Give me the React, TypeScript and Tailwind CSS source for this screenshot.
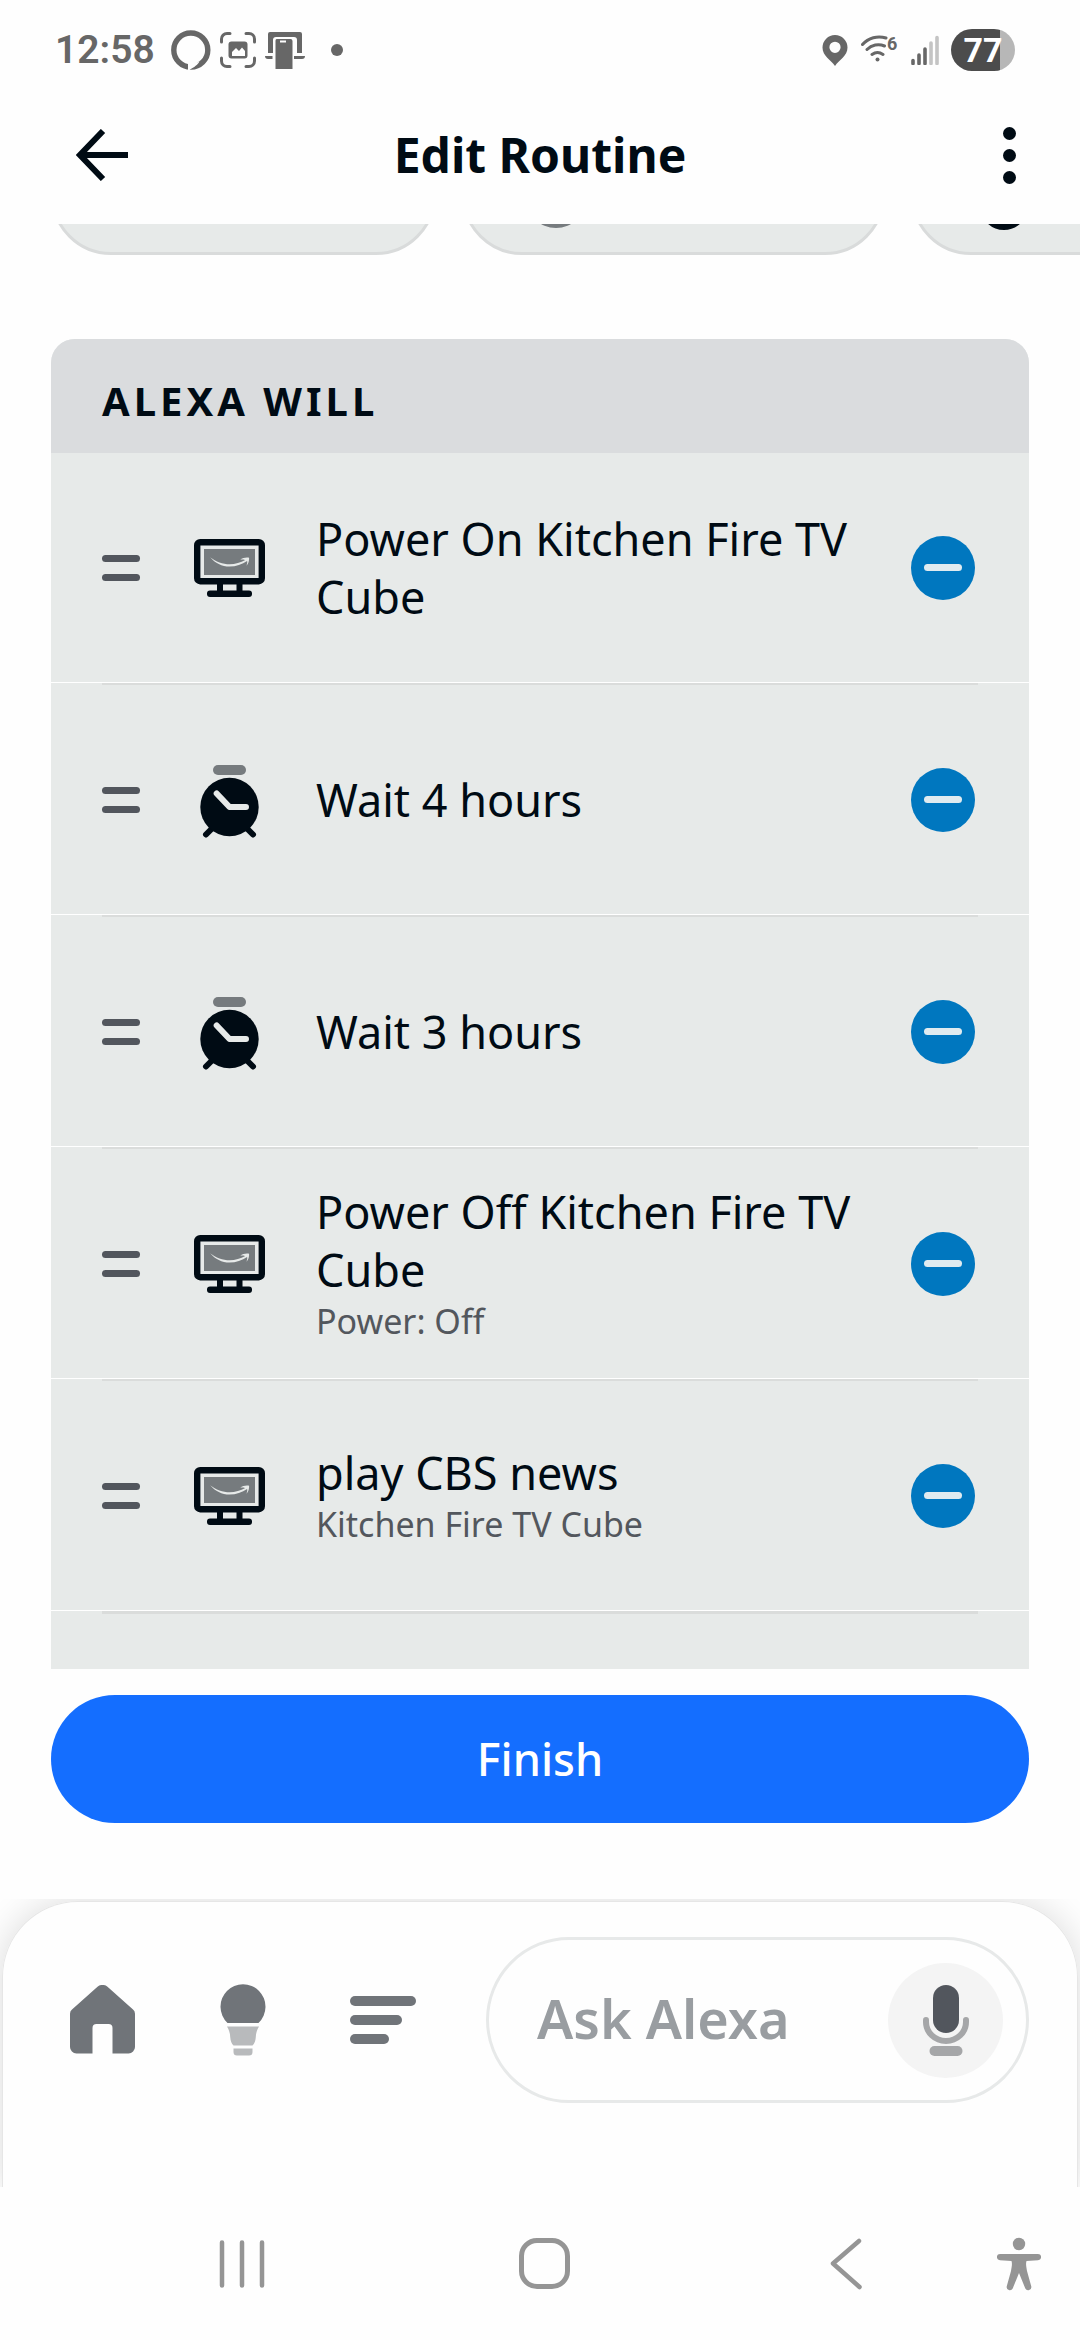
import React from 'react';

interface Action {
  id: number;
  title: string;
  subtitle?: string;
  icon: 'tv' | 'clock';
}

const actions: Action[] = [
  { id: 1, title: 'Power On Kitchen Fire TV Cube', icon: 'tv' },
  { id: 2, title: 'Wait 4 hours', icon: 'clock' },
  { id: 3, title: 'Wait 3 hours', icon: 'clock' },
  { id: 4, title: 'Power Off Kitchen Fire TV Cube', subtitle: 'Power: Off', icon: 'tv' },
  { id: 5, title: 'play CBS news', subtitle: 'Kitchen Fire TV Cube', icon: 'tv' },
];

const TvIcon = () => (
  <svg className="w-[71px] h-[58px]" viewBox="0 0 71 58" fill="none">
    <rect x="3.2" y="3.2" width="64.6" height="39" rx="3" stroke="#000b14" strokeWidth="6.4" />
    <rect x="10" y="10" width="51" height="26" fill="#767b7e" />
    <path
      d="M16.2 18.3c5.600 4.600 12.500 7 19.500 7 5.500 0 11-1.500 15.600-4.200-.8-.9-3-.8-5-.5 2-1.900 6.600-2.700 8.800-1.900.2 2.500-.6 6-2.600 8 .6-1.700 1-3.500.6-4.600-5 3.500-11 5.500-17.600 5.500-7.500 0-14.500-3.500-19.300-9.300z"
      fill="#e7eae9"
    />
    <path d="M23 44h6v8h-6zM42.500 44h6v8h-6z" fill="#000b14" />
    <rect x="13" y="51.500" width="45" height="6.500" rx="3" fill="#000b14" />
  </svg>
);

const ClockIcon = () => (
  <svg className="w-[71px] h-[76px]" viewBox="0 -3 71 76" fill="none" strokeLinecap="round" strokeLinejoin="round">
    <rect x="19" y="0" width="33" height="10" rx="5" fill="#767b7e" />
    <path d="M12 69.500l8-8M59 69.500l-8-8" stroke="#000b14" strokeWidth="6" />
    <circle cx="35.500" cy="42" r="29.200" fill="#000b14" />
    <path d="M22.700 28.500L35.500 42H52" stroke="#e7eae9" strokeWidth="6" />
  </svg>
);

const StatusBar = () => (
  <div className="flex h-[100px] items-center justify-between pl-[55px] pr-[65px] font-[Roboto,sans-serif]">
    <div className="flex items-center text-[#676767]">
      <span className="mr-[16px] text-[39px] leading-[48px] font-semibold">12:58</span>
      <svg className="mr-[9px] size-[40px]" viewBox="0 0 40 40">
        <circle cx="19.800" cy="20" r="17" fill="none" stroke="currentColor" strokeWidth="5.400" />
        <path d="M17 33.500v6.500h1.500c2.500-2 7-3.500 10-8.500l-4 1.500z" fill="#fefefe" />
      </svg>
      <svg className="mr-[9px] size-[36px]" viewBox="0 0 36 36" fill="none">
        <path
          d="M1.500 10V7a5.500 5.500 0 0 1 5.500-5.500h3M26 1.500h3A5.500 5.500 0 0 1 34.500 7v3M34.500 26v3a5.500 5.500 0 0 1-5.500 5.500h-3M10 34.500H7A5.500 5.500 0 0 1 1.500 29v-3"
          stroke="currentColor"
          strokeWidth="3"
          strokeLinecap="round"
        />
        <rect x="8.500" y="9.500" width="19" height="17" rx="3" fill="currentColor" />
        <path d="M12 24v-4l4-4 3 3 3-3.500 3 3.500v5z" fill="#fff" />
      </svg>
      <svg className="mr-[26px] h-[38px] w-[40px]" viewBox="0 0 40 38" fill="currentColor">
        <path d="M5 1h30a2 2 0 0 1 2 2v19h-5V9a3 3 0 0 0-3-3H11a3 3 0 0 0-3 3v13H3V3a2 2 0 0 1 2-2z" />
        <path d="M0 25h7.500v3H3a3 3 0 0 1-3-3zM29 25h11a3 3 0 0 1-3 3h-8z" />
        <path fillRule="evenodd" d="M11.500 8h14a2 2 0 0 1 2 2v28h-17V10a2 2 0 0 1 1-2zm3.500 1.500v2h6v-2z" />
      </svg>
      <span className="size-[12px] rounded-full bg-[#676767]" />
    </div>
    <div className="flex items-center text-[#676767]">
      <svg className="mr-[13px] h-[31px] w-[26px]" viewBox="0 0 26 31" fill="currentColor">
        <path fillRule="evenodd" d="M13 0a12.500 12.500 0 0 1 12.500 12.500C25.500 21 17 25 13 31 9 25 .5 21 .5 12.500A12.500 12.500 0 0 1 13 0zm0 6.700a5.600 5.600 0 1 0 0 11.200 5.600 5.600 0 0 0 0-11.200z" />
      </svg>
      <svg className="mr-[13px] h-[32px] w-[37px]" viewBox="0 0 37 32" fill="none">
        <path d="M1.500 10.500A22 22 0 0 1 25 4M6 15.500a16 16 0 0 1 17.500-3.500M11 20.500a9.500 9.500 0 0 1 11 0" stroke="currentColor" strokeWidth="3" strokeLinecap="round" />
        <circle cx="16.500" cy="25.500" r="2" fill="currentColor" />
        <text x="26" y="15.500" fontSize="18" fontWeight="700" fill="currentColor">6</text>
      </svg>
      <svg className="mr-[12px] h-[30px] w-[28px]" viewBox="0 0 28 30" strokeWidth="3.600" strokeLinecap="round">
        <path d="M2 25.500v3M8 20v8.500M14 14v14.500" stroke="#676767" />
        <path d="M20 8v20.500M26 2.500v26" stroke="#c4c4c4" />
      </svg>
      <span className="flex h-[42px] w-[64px] items-center justify-center rounded-full bg-linear-to-r from-[#4c4c4c] from-77% to-[#b7b7b7] to-77% text-[34px] font-bold text-white">
        77
      </span>
    </div>
  </div>
);

const Header = () => (
  <header className="mb-[14px] flex h-[110px] items-center justify-between px-[64px]">
    <button aria-label="Back" className="flex w-[64px] justify-end text-[#000b14]">
      <svg className="size-[52px]" viewBox="0 0 52 52" fill="none" stroke="currentColor" strokeWidth="6">
        <path d="M52 26H6M27 2L4 26l23 24" />
      </svg>
    </button>
    <h1 className="text-[48px] leading-[60px] font-bold">Edit Routine</h1>
    <button aria-label="More options" className="flex w-[64px] flex-col items-end gap-[9px]">
      <span className="size-[13px] rounded-full bg-[#000b14]" />
      <span className="size-[13px] rounded-full bg-[#000b14]" />
      <span className="size-[13px] rounded-full bg-[#000b14]" />
    </button>
  </header>
);

// Filter chips, scrolled most of the way under the header
const Chips = () => (
  <div className="mb-[84px] flex h-[31px] items-end gap-[26px] overflow-hidden pl-[51px]">
    <div className="h-[120px] w-[385px] shrink-0 rounded-full border-3 border-[#d9dbdb] bg-[#e7eae9]" />
    <div className="flex h-[120px] w-[423px] shrink-0 items-end rounded-full border-3 border-[#d9dbdb] bg-[#e7eae9] pb-[24px] pl-[61px]">
      <span className="size-[60px] rounded-full bg-[#767b7e]" />
    </div>
    <div className="flex h-[120px] w-[400px] shrink-0 items-end rounded-full border-3 border-[#d9dbdb] bg-[#e7eae9] pb-[22px] pl-[66px]">
      <span className="size-[48px] rounded-full border-6 border-[#000b14]" />
    </div>
  </div>
);

const ActionRow: React.FC<{ action: Action }> = ({ action }) => (
  <li className="group border-b border-white">
    <div className="mx-[51px] h-[2px] bg-[#dadcdb] group-first:hidden" />
    <div className="flex min-h-[229px] items-center pl-[51px] pr-[54px]">
      <button aria-label="Reorder" className="flex w-[38px] flex-col gap-[12px]">
        <span className="h-[7px] rounded-full bg-[#52565d]" />
        <span className="h-[7px] rounded-full bg-[#52565d]" />
      </button>
      <div className="ml-[54px] mr-[51px] flex w-[71px] shrink-0 justify-center">
        {action.icon === 'tv' ? <TvIcon /> : <ClockIcon />}
      </div>
      <div className="flex-1">
        <p className="text-[45px] leading-[58px]">{action.title}</p>
        {action.subtitle && <p className="text-[34px] leading-[45px] text-[#53575d]">{action.subtitle}</p>}
      </div>
      <button
        aria-label={`Remove ${action.title}`}
        className="ml-[36px] flex size-[64px] shrink-0 items-center justify-center rounded-full bg-[#0077bf]"
      >
        <span className="h-[7px] w-[38px] rounded-full bg-[#e0ebf0]" />
      </button>
    </div>
  </li>
);

const BottomBar = () => (
  <div className="overflow-hidden pt-[2px]">
    <div className="mx-[2px] flex items-center rounded-t-[76px] border border-b-0 border-[#e6e6e6] pt-[35px] pr-[48px] pb-[84px] pl-[67px] shadow-[0_0_36px_rgba(0,0,0,0.14)]">
      <nav className="mr-[70px] flex items-center gap-[74px] text-[#707479]">
        <button aria-label="Home">
          <svg className="h-[70px] w-[66px]" viewBox="0 0 66 70" fill="currentColor">
            <path d="M27.500 1.800a7.500 7.500 0 0 1 10 0L63 24.500a5.500 5.500 0 0 1 2 4.200V62a6.500 6.500 0 0 1-6.500 6.500H42.500V43a4 4 0 0 0-4-4h-12a4 4 0 0 0-4 4v25.500H6.500A6.500 6.500 0 0 1 0 62V28.700a5.500 5.500 0 0 1 2-4.200z" />
          </svg>
        </button>
        <button aria-label="Devices">
          <svg className="h-[72px] w-[66px]" viewBox="0 0 66 72">
            <path d="M17.500 39a22.500 22.500 0 1 1 31 0z" fill="currentColor" />
            <path d="M17 42.500h32c-1.800 3-3 6-3.200 10.500-.3 4-1.300 6.500-3.300 8.500h-19c-2-2-3-4.500-3.300-8.500-.2-4.500-1.400-7.500-3.200-10.500zM23.500 64.500h19v3.500a3.500 3.500 0 0 1-3.500 3.500H27a3.500 3.500 0 0 1-3.500-3.500z" fill="#b8babc" />
          </svg>
        </button>
        <button aria-label="More" className="flex w-[66px] flex-col gap-[9px]">
          <span className="h-[10px] w-full rounded-full bg-[#707479]" />
          <span className="h-[10px] w-[52px] rounded-full bg-[#707479]" />
          <span className="h-[10px] w-[39px] rounded-full bg-[#707479]" />
        </button>
      </nav>
      <div className="flex h-[166px] min-w-0 flex-1 items-center rounded-full border-3 border-[#e7e9e9] pr-[23px] pl-[48px]">
        <input
          type="text"
          aria-label="Ask Alexa"
          placeholder="Ask Alexa"
          className="min-w-0 flex-1 pb-1 text-[54px] leading-[70px] font-semibold outline-none placeholder:text-[#999da1]"
        />
        <button aria-label="Speak" className="flex size-[115px] shrink-0 items-center justify-center rounded-full bg-[#f4f4f4]">
          <svg className="h-[71px] w-[46px]" viewBox="0 0 46 71" fill="none">
            <path d="M3 35v2a20 19 0 0 0 40 0v-2" stroke="#a5a6a8" strokeWidth="6" strokeLinecap="round" />
            <rect x="10" y="0" width="26" height="48" rx="13" fill="#52565d" />
            <rect x="6.500" y="61" width="33" height="10" rx="5" fill="#a5a6a8" />
          </svg>
        </button>
      </div>
    </div>
  </div>
);

const SystemNav = () => (
  <nav className="flex h-[153px] items-center pr-[39px] pl-[91px] text-[#959595]">
    <button aria-label="Recents" className="flex flex-1 justify-center">
      <svg className="h-[52px] w-[46px]" viewBox="0 0 46 52" fill="none" stroke="currentColor" strokeWidth="4.500" strokeLinecap="round">
        <path d="M3 4.500v43M23 4.500v43M43 4.500v43" />
      </svg>
    </button>
    <button aria-label="Home screen" className="flex flex-1 justify-center">
      <span className="size-[51px] rounded-[18px] border-5 border-[#959595]" />
    </button>
    <button aria-label="Back" className="flex flex-1 justify-center">
      <svg className="h-[52px] w-[32px]" viewBox="0 0 32 52" fill="none" stroke="currentColor" strokeWidth="4.500" strokeLinecap="round" strokeLinejoin="round">
        <path d="M29 3L3 25.500 29.500 49" />
      </svg>
    </button>
    <button aria-label="Accessibility">
      <svg className="h-[54px] w-[44px]" viewBox="0 0 44 54" fill="currentColor">
        <circle cx="22" cy="7" r="6.200" />
        <path d="M3 17h38a3 3 0 0 1 0 6.200L29.500 24c-1 3 0 7 .5 10l4.300 15.500a3.200 3.200 0 0 1-6 2L22 36l-6.300 15.500a3.200 3.200 0 0 1-6-2L14 34c.5-3 1.500-7 .5-10L3 23.200A3 3 0 0 1 3 17z" />
      </svg>
    </button>
  </nav>
);

const App: React.FC = () => {
  return (
    <div className="flex min-h-screen flex-col bg-[#fefefe] font-['Noto_Sans',sans-serif] text-[#000b14]">
      <StatusBar />
      <Header />
      <main className="flex-1">
        <Chips />
        <section className="mx-[51px] overflow-hidden rounded-t-[24px] bg-[#e7eae9]">
          <div className="flex h-[114px] items-center bg-[#dadcde] pt-[10px] pl-[51px]">
            <h2 className="text-[40px] leading-[48px] font-bold tracking-widest">ALEXA WILL</h2>
          </div>
          <ul>
            {actions.map((action) => (
              <ActionRow key={action.id} action={action} />
            ))}
          </ul>
          <div className="h-[58px] px-[51px]">
            <div className="h-[3px] bg-[#dadcdb]" />
          </div>
        </section>
        <div className="mt-[26px] mb-[76px] px-[51px]">
          <button className="h-[128px] w-full rounded-full bg-[#146eff] text-[45px] leading-[58px] font-medium text-white">
            Finish
          </button>
        </div>
      </main>
      <BottomBar />
      <SystemNav />
    </div>
  );
};

export default App;
